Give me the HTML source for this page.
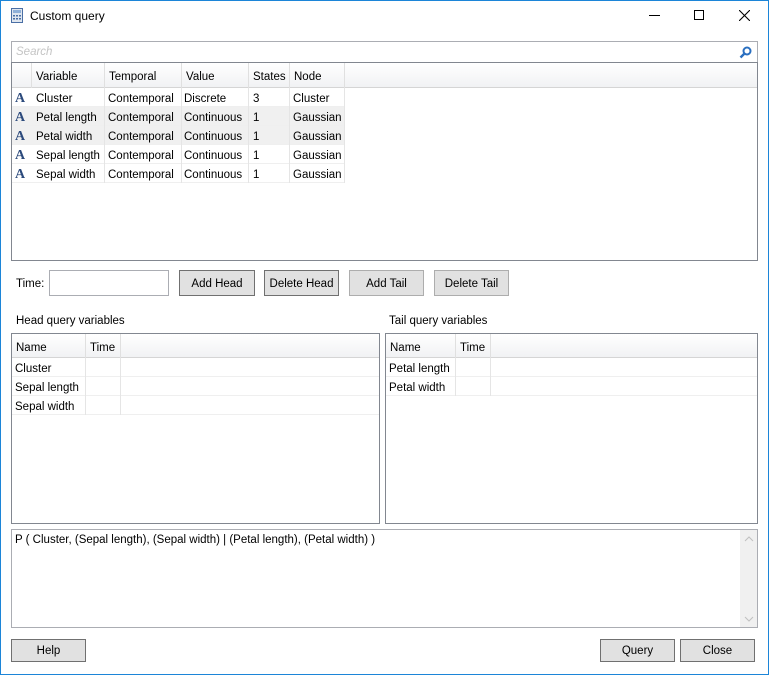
<!DOCTYPE html>
<html><head><style>
*{box-sizing:border-box;margin:0;padding:0}
body{width:769px;height:675px;background:#fff;font-family:"Liberation Sans",sans-serif;font-size:11.5px;color:#000;position:relative;overflow:hidden}
.a{position:absolute}
.win{left:0;top:0;width:769px;height:675px;border:1px solid #1c85d8}
.btn{position:absolute;background:#e1e1e1;border:1px solid #adadad;text-align:center;line-height:23px;height:25px}
.bb{border-color:#707070}
.grid{position:absolute;border:1px solid #828790;background:#fff}
.hd{position:absolute;left:0;right:0;background:linear-gradient(#fff,#f1f2f4);border-bottom:1px solid #d5d5d5}
.c{position:absolute;white-space:nowrap;overflow:hidden;line-height:22px;padding-left:4px;border-right:1px solid #e5e5e5;height:19px}
.hc{line-height:29px;height:25px;border-right:1px solid #e0e0e0}
.row{position:absolute;height:19px;border-bottom:1px solid #efefef}
.ic{position:absolute;left:3px;font-family:"Liberation Serif",serif;font-weight:bold;color:#2c4a7c;font-size:14px;line-height:21px}
</style></head><body>
<div class="a win"></div>
<svg class="a" style="left:11px;top:8px" width="12" height="15" viewBox="0 0 12 15"><rect x="0.5" y="0.5" width="11" height="14" fill="#dfe6ef" stroke="#4a6fa5"/><rect x="2" y="2" width="8" height="3" fill="#8fb0d8"/><g fill="#4a6fa5"><rect x="2" y="7" width="2" height="1.5"/><rect x="5" y="7" width="2" height="1.5"/><rect x="8" y="7" width="2" height="1.5"/><rect x="2" y="10" width="2" height="1.5"/><rect x="5" y="10" width="2" height="1.5"/><rect x="8" y="10" width="2" height="1.5"/></g></svg>
<div class="a" style="left:30px;top:9px;font-size:12px">Custom query</div>
<div class="a" style="left:649px;top:15px;width:11px;height:1px;background:#000"></div>
<div class="a" style="left:694px;top:10px;width:10px;height:10px;border:1px solid #000"></div>
<svg class="a" style="left:739px;top:10px" width="11" height="11"><path d="M0 0L11 11M11 0L0 11" stroke="#000" stroke-width="1.1"/></svg>

<div class="a" style="left:11px;top:41px;width:747px;height:22px;border:1px solid #abadb3;border-bottom:none"></div>
<div class="a" style="left:16px;top:46px;color:#c4c4c4;font-style:italic">Search</div>
<svg class="a" style="left:739px;top:46px" width="13" height="13"><circle cx="8" cy="5" r="3.5" fill="none" stroke="#2a6fc0" stroke-width="2"/><path d="M5.5 7.5L1.5 11.5" stroke="#2a6fc0" stroke-width="2.4"/></svg>

<div class="grid" style="left:11px;top:62px;width:747px;height:199px">
 <div class="hd" style="top:0;height:25px"></div>
 <div class="c hc" style="left:0;width:20px;top:0"></div>
 <div class="c hc" style="left:20px;width:73px;top:0">Variable</div>
 <div class="c hc" style="left:93px;width:77px;top:0">Temporal</div>
 <div class="c hc" style="left:170px;width:67px;top:0">Value</div>
 <div class="c hc" style="left:237px;width:41px;top:0">States</div>
 <div class="c hc" style="left:278px;width:55px;top:0">Node</div>
 <div class="row" style="top:25px;left:0;width:333px"><span class="ic">A</span><div class="c" style="left:20px;width:73px">Cluster</div><div class="c" style="left:93px;width:77px;padding-left:3px">Contemporal</div><div class="c" style="left:170px;width:67px;padding-left:2px">Discrete</div><div class="c" style="left:237px;width:41px">3</div><div class="c" style="left:278px;width:55px;padding-left:3px">Cluster</div></div>
 <div class="row" style="top:44px;left:0;width:333px;background:#f0f0f0"><span class="ic">A</span><div class="c" style="left:20px;width:73px">Petal length</div><div class="c" style="left:93px;width:77px;padding-left:3px">Contemporal</div><div class="c" style="left:170px;width:67px;padding-left:2px">Continuous</div><div class="c" style="left:237px;width:41px">1</div><div class="c" style="left:278px;width:55px;padding-left:3px">Gaussian</div></div>
 <div class="row" style="top:63px;left:0;width:333px;background:#f0f0f0"><span class="ic">A</span><div class="c" style="left:20px;width:73px">Petal width</div><div class="c" style="left:93px;width:77px;padding-left:3px">Contemporal</div><div class="c" style="left:170px;width:67px;padding-left:2px">Continuous</div><div class="c" style="left:237px;width:41px">1</div><div class="c" style="left:278px;width:55px;padding-left:3px">Gaussian</div></div>
 <div class="row" style="top:82px;left:0;width:333px"><span class="ic">A</span><div class="c" style="left:20px;width:73px">Sepal length</div><div class="c" style="left:93px;width:77px;padding-left:3px">Contemporal</div><div class="c" style="left:170px;width:67px;padding-left:2px">Continuous</div><div class="c" style="left:237px;width:41px">1</div><div class="c" style="left:278px;width:55px;padding-left:3px">Gaussian</div></div>
 <div class="row" style="top:101px;left:0;width:333px"><span class="ic">A</span><div class="c" style="left:20px;width:73px">Sepal width</div><div class="c" style="left:93px;width:77px;padding-left:3px">Contemporal</div><div class="c" style="left:170px;width:67px;padding-left:2px">Continuous</div><div class="c" style="left:237px;width:41px">1</div><div class="c" style="left:278px;width:55px;padding-left:3px">Gaussian</div></div>
</div>

<div class="a" style="left:16px;top:278px">Time:</div>
<div class="a" style="left:49px;top:270px;width:120px;height:26px;border:1px solid #abadb3"></div>
<div class="btn bb" style="left:179px;top:270px;width:76px;height:26px;line-height:26px">Add Head</div>
<div class="btn bb" style="left:264px;top:270px;width:75px;height:26px;line-height:26px">Delete Head</div>
<div class="btn" style="left:349px;top:270px;width:75px;height:26px;line-height:26px">Add Tail</div>
<div class="btn" style="left:434px;top:270px;width:75px;height:26px;line-height:26px">Delete Tail</div>

<div class="a" style="left:16px;top:315px">Head query variables</div>
<div class="a" style="left:389px;top:315px">Tail query variables</div>

<div class="grid" style="left:11px;top:333px;width:369px;height:191px">
 <div class="hd" style="top:0;height:24px"></div>
 <div class="c hc" style="left:0;width:74px;top:0;height:24px">Name</div>
 <div class="c hc" style="left:74px;width:35px;top:0;height:24px">Time</div>
 <div class="row" style="top:24px;left:0;right:0"><div class="c" style="left:0;width:74px;padding-left:3px">Cluster</div><div class="c" style="left:74px;width:35px"></div></div>
 <div class="row" style="top:43px;left:0;right:0"><div class="c" style="left:0;width:74px;padding-left:3px">Sepal length</div><div class="c" style="left:74px;width:35px"></div></div>
 <div class="row" style="top:62px;left:0;right:0"><div class="c" style="left:0;width:74px;padding-left:3px">Sepal width</div><div class="c" style="left:74px;width:35px"></div></div>
</div>
<div class="grid" style="left:385px;top:333px;width:373px;height:191px">
 <div class="hd" style="top:0;height:24px"></div>
 <div class="c hc" style="left:0;width:70px;top:0;height:24px">Name</div>
 <div class="c hc" style="left:70px;width:35px;top:0;height:24px">Time</div>
 <div class="row" style="top:24px;left:0;right:0"><div class="c" style="left:0;width:70px;padding-left:3px">Petal length</div><div class="c" style="left:70px;width:35px"></div></div>
 <div class="row" style="top:43px;left:0;right:0"><div class="c" style="left:0;width:70px;padding-left:3px">Petal width</div><div class="c" style="left:70px;width:35px"></div></div>
</div>

<div class="a" style="left:11px;top:529px;width:747px;height:99px;border:1px solid #abadb3"></div>
<div class="a" style="left:740px;top:530px;width:17px;height:97px;background:#f0f0f0"></div>
<svg class="a" style="left:744px;top:536px" width="10" height="6"><path d="M1 5L5 1L9 5" fill="none" stroke="#c0c0c0"/></svg>
<svg class="a" style="left:744px;top:616px" width="10" height="6"><path d="M1 1L5 5L9 1" fill="none" stroke="#c0c0c0"/></svg>
<div class="a" style="left:15px;top:534px">P ( Cluster, (Sepal length), (Sepal width) | (Petal length), (Petal width) )</div>

<div class="btn bb" style="left:11px;top:639px;width:75px;height:23px;line-height:23px">Help</div>
<div class="btn bb" style="left:600px;top:639px;width:75px;height:23px;line-height:23px">Query</div>
<div class="btn bb" style="left:680px;top:639px;width:75px;height:23px;line-height:23px">Close</div>
</body></html>
